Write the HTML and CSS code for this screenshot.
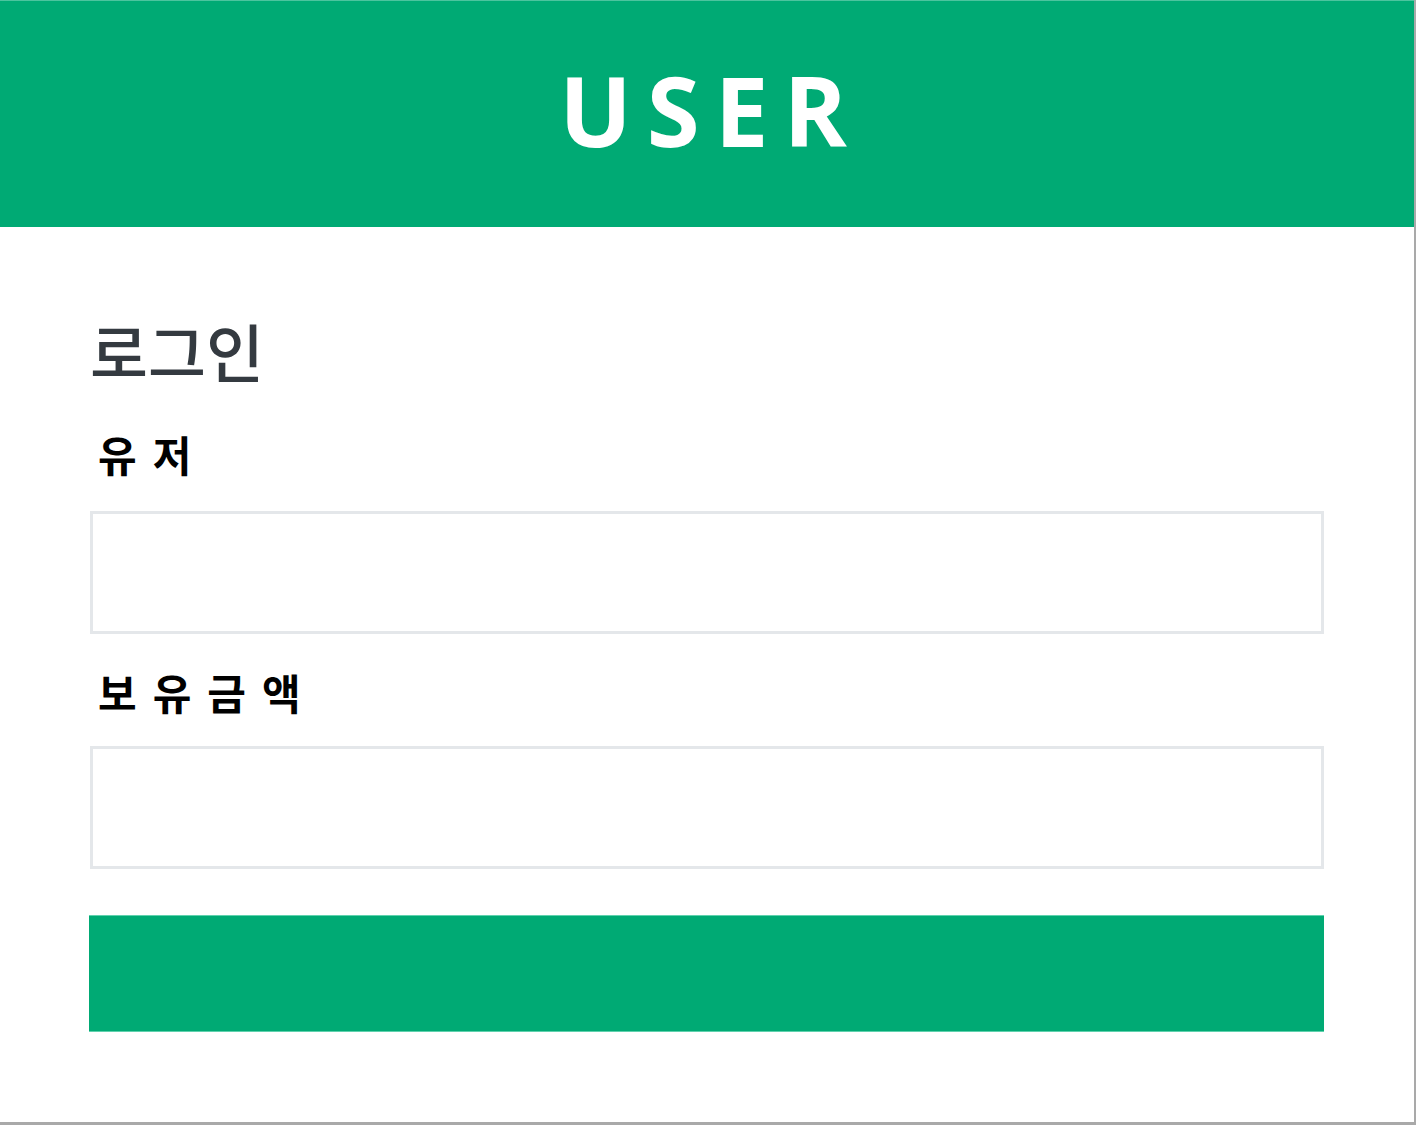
FILE: index.html
```html
<!DOCTYPE html>
<html lang="ko">
<head>
<meta charset="utf-8">
<title>USER</title>
<link rel="stylesheet" href="styles.css">
</head>
<body>
<div class="frame">
  <header class="top">
    <h1 class="brand">USER</h1>
  </header>
  <main class="content">
    <h2 class="title">로그인</h2>
    <form class="form">
      <label class="label label-first" for="user">유저</label>
      <input class="field" id="user" type="text">
      <label class="label label-next" for="money">보유금액</label>
      <input class="field" id="money" type="text">
      <button class="submit" type="button"></button>
    </form>
  </main>
</div>
</body>
</html>
```

FILE: styles.css
```css
* { box-sizing: border-box; }
html, body { margin: 0; padding: 0; background: #fff; }
body { font-family: "Noto Sans CJK KR", "Noto Sans", sans-serif; }
.frame {
  width: 1416px;
  height: 1125px;
  border-right: 2px solid #a9a9a9;
  border-bottom: 3px solid #a9a9a9;
  overflow: hidden;
}
.top {
  height: 227px;
  background: #00aa74;
  border-top: 1px solid #4cc49e;
  display: flex;
  align-items: center;
  justify-content: center;
}
.brand {
  margin: 0 0 8px 0;
  color: #fff;
  font-family: "Open Sans", "Liberation Sans", sans-serif;
  font-weight: 700;
  font-size: 96px;
  letter-spacing: 15px;
  line-height: 1;
  padding-left: 7px;
}
.content {
  padding: 87px 90px 0 90px;
}
.title {
  margin: 0;
  font-size: 63px;
  font-weight: 500;
  color: #343a40;
  line-height: 72px;
}
.form { display: flex; flex-direction: column; }
.label {
  font-size: 42px;
  font-weight: 700;
  color: #000;
  letter-spacing: 16px;
  padding-left: 8px;
  line-height: 52px;
}
.label-first { margin: 42px 0 31px; }
.label-next { margin: 32px 0 28px; }
.field {
  height: 123px;
  border: 3px solid #e4e7ea;
  background: #fff;
  width: 100%;
  margin: 0;
}
.submit {
  margin: 46px 0 0 -1px;
  height: 117px;
  border: 0;
  background: #00aa74;
  border-top: 1px solid #5fd1ad;
  border-bottom: 1px solid #5fd1ad;
  width: calc(100% + 1px);
}
```
